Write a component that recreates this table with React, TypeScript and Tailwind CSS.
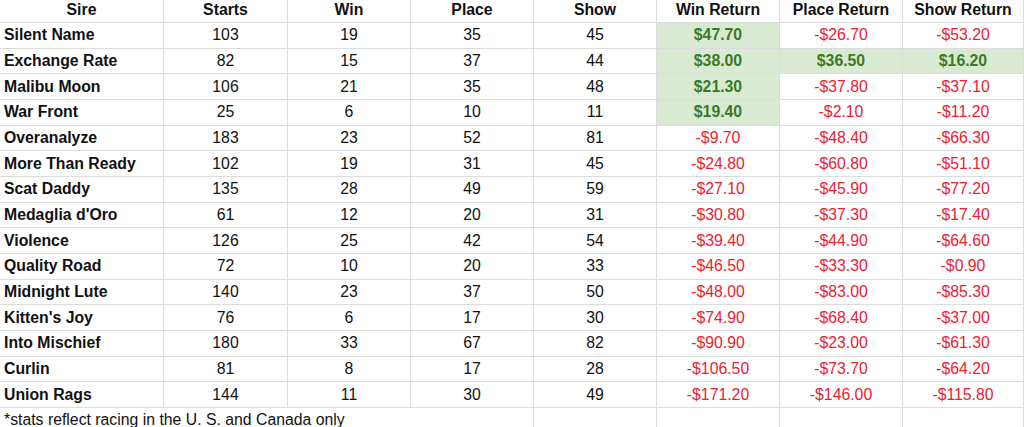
const rows: [string, number, number, number, number, string, string, string][] = [
  ["Silent Name", 103, 19, 35, 45, "$47.70", "-$26.70", "-$53.20"],
  ["Exchange Rate", 82, 15, 37, 44, "$38.00", "$36.50", "$16.20"],
  ["Malibu Moon", 106, 21, 35, 48, "$21.30", "-$37.80", "-$37.10"],
  ["War Front", 25, 6, 10, 11, "$19.40", "-$2.10", "-$11.20"],
  ["Overanalyze", 183, 23, 52, 81, "-$9.70", "-$48.40", "-$66.30"],
  ["More Than Ready", 102, 19, 31, 45, "-$24.80", "-$60.80", "-$51.10"],
  ["Scat Daddy", 135, 28, 49, 59, "-$27.10", "-$45.90", "-$77.20"],
  ["Medaglia d'Oro", 61, 12, 20, 31, "-$30.80", "-$37.30", "-$17.40"],
  ["Violence", 126, 25, 42, 54, "-$39.40", "-$44.90", "-$64.60"],
  ["Quality Road", 72, 10, 20, 33, "-$46.50", "-$33.30", "-$0.90"],
  ["Midnight Lute", 140, 23, 37, 50, "-$48.00", "-$83.00", "-$85.30"],
  ["Kitten's Joy", 76, 6, 17, 30, "-$74.90", "-$68.40", "-$37.00"],
  ["Into Mischief", 180, 33, 67, 82, "-$90.90", "-$23.00", "-$61.30"],
  ["Curlin", 81, 8, 17, 28, "-$106.50", "-$73.70", "-$64.20"],
  ["Union Rags", 144, 11, 30, 49, "-$171.20", "-$146.00", "-$115.80"],
];

const headers = ["Sire", "Starts", "Win", "Place", "Show", "Win Return", "Place Return", "Show Return"];

const cell = "border-r border-b border-[#dcdcdc] flex items-center";

const Money = ({ value }: { value: string }) => {
  const up = !value.startsWith("-");
  return (
    <div
      className={`${cell} justify-center ${
        up ? "bg-[#d9ead3] text-[#3b7a25] font-bold" : "text-[#ec2130]"
      }`}
    >
      {value}
    </div>
  );
};

export default function App() {
  return (
    <div
      className="w-[1024px] h-[427px] overflow-hidden bg-white text-[#111] text-[15.8px] leading-none"
      style={{ fontFamily: '"Liberation Sans", Arial, sans-serif' }}
    >
      <div className="grid grid-cols-[164px_124px_123px_123px_123px_123px_123px_1fr] grid-rows-[23px_repeat(15,25.67px)_26px]">
        {headers.map((h) => (
          <div key={h} className={`${cell} justify-center font-bold pb-[2px]`}>
            {h}
          </div>
        ))}
        {rows.map((r) => (
          <div key={r[0]} className="contents">
            <div className={`${cell} font-bold pl-[4px]`}>{r[0]}</div>
            <div className={`${cell} justify-center`}>{r[1]}</div>
            <div className={`${cell} justify-center`}>{r[2]}</div>
            <div className={`${cell} justify-center`}>{r[3]}</div>
            <div className={`${cell} justify-center`}>{r[4]}</div>
            <Money value={r[5]} />
            <Money value={r[6]} />
            <Money value={r[7]} />
          </div>
        ))}
        <div className="col-span-4 border-r border-[#dcdcdc] flex items-start pt-[4px] pl-[4px] whitespace-nowrap">
          *stats reflect racing in the U. S. and Canada only
        </div>
        <div className="border-r border-[#dcdcdc]" />
        <div className="border-r border-[#dcdcdc]" />
        <div className="border-r border-[#dcdcdc]" />
        <div className="border-r border-[#dcdcdc]" />
      </div>
    </div>
  );
}
